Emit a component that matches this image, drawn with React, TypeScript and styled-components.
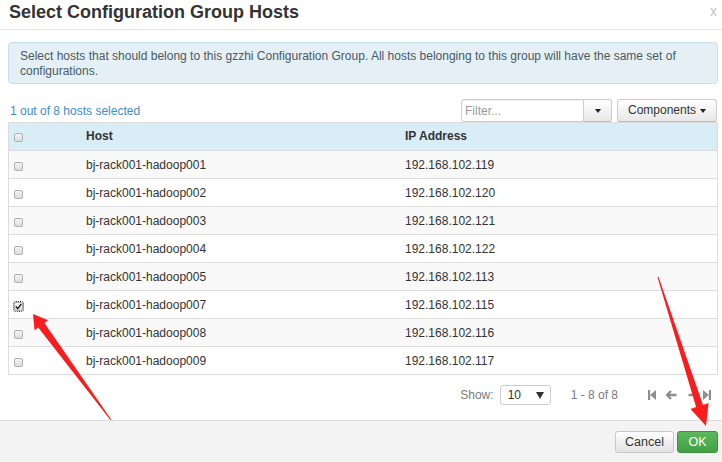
import React from "react";
import styled, { createGlobalStyle } from "styled-components";

const GlobalStyle = createGlobalStyle`
  html, body { margin: 0; padding: 0; background: #fff; }
  body {
    font-family: "Liberation Sans", Arial, Helvetica, sans-serif;
    font-size: 12px;
    color: #333;
  }
  * { box-sizing: border-box; }
`;

const Modal = styled.div`
  position: relative;
  width: 722px;
  height: 462px;
  overflow: hidden;
  display: flex;
  flex-direction: column;
  background: #fff;
`;

const Header = styled.div`
  display: flex;
  justify-content: space-between;
  align-items: flex-start;
  height: 30px;
  padding: 0 5px 0 9px;
  border-bottom: 1px solid #e5e5e5;
`;

const Title = styled.h3`
  margin: 0;
  font-size: 18px;
  line-height: 24px;
  font-weight: bold;
  color: #333;
`;

const Close = styled.span`
  font-size: 14px;
  line-height: 22px;
  color: #c4c4c4;
`;

const Body = styled.div`
  flex: 1;
  display: flex;
  flex-direction: column;
  padding: 12px 4px 0 8px;
`;

const Alert = styled.div`
  border: 1px solid #c9dde6;
  background: #e4f0f5;
  border-radius: 4px;
  padding: 6px 11px 4px;
  line-height: 15px;
  color: #4a5a63;
`;

const Toolbar = styled.div`
  margin-top: 15px;
  height: 23px;
  display: flex;
  align-items: center;
  justify-content: space-between;
`;

const Count = styled.span`
  padding-left: 2px;
  color: #428bca;
`;

const Tools = styled.div`
  display: flex;
  align-items: stretch;
  height: 23px;
  margin-right: 1px;
`;

const FilterInput = styled.input`
  width: 123px;
  height: 23px;
  border: 1px solid #ccc;
  border-radius: 3px 0 0 3px;
  padding: 0 3px;
  font-family: inherit;
  font-size: 12px;
  color: #333;
  outline: none;
  box-shadow: inset 0 1px 1px rgba(0, 0, 0, 0.06);
  &::placeholder { color: #9a9a9a; }
`;

const Btn = styled.button<{ $w?: number; $grouped?: boolean }>`
  width: ${(p) => (p.$w ? `${p.$w}px` : "auto")};
  height: 23px;
  margin: 0;
  padding: 0 0 1px;
  display: flex;
  align-items: center;
  justify-content: center;
  gap: 4px;
  font-family: inherit;
  font-size: 12px;
  color: #333;
  border: 1px solid #ccc;
  border-bottom-color: #b8b8b8;
  border-radius: ${(p) => (p.$grouped ? "0 3px 3px 0" : "3px")};
  ${(p) => (p.$grouped ? "border-left: none;" : "margin-left: 5px;")}
  background: linear-gradient(#ffffff, #e8e8e8);
`;

const Caret = styled.span`
  width: 0;
  height: 0;
  border-left: 3px solid transparent;
  border-right: 3px solid transparent;
  border-top: 4px solid #222;
  margin-top: 1px;
`;

const Table = styled.div`
  border: 1px solid #ddd;
`;

const Row = styled.div<{ $head?: boolean; $striped?: boolean }>`
  display: grid;
  grid-template-columns: 77px 319px 1fr;
  align-items: center;
  height: ${(p) => (p.$head ? "27px" : "28px")};
  padding-bottom: ${(p) => (p.$head ? "2px" : "0")};
  border-top: ${(p) => (p.$head ? "none" : "1px solid #ddd")};
  background: ${(p) => (p.$head ? "#d9edf7" : p.$striped ? "#f9f9f9" : "#fff")};
  font-weight: ${(p) => (p.$head ? "bold" : "normal")};
  color: #333;
`;

const CheckCell = styled.div<{ $head?: boolean }>`
  padding-left: 5px;
  display: flex;
  align-items: center;
  padding-top: ${(p) => (p.$head ? "4px" : "3px")};
`;

const Box = styled.span<{ $checked?: boolean }>`
  position: relative;
  width: 9px;
  height: 9px;
  border: 1px solid #b0b0b0;
  border-radius: 2px;
  background: linear-gradient(#f4f4f4, #dcdcdc);
  outline: ${(p) => (p.$checked ? "1px dotted #333" : "none")};
  outline-offset: 0px;
  display: flex;
  align-items: center;
  justify-content: center;
`;

const Pager = styled.div`
  display: flex;
  align-items: center;
  justify-content: flex-end;
  padding: 10px 7px 0 0;
  color: #777;
`;

const ShowLabel = styled.span`
  color: #7a7a7a;
`;

const Select = styled.div`
  margin-left: 6px;
  width: 51px;
  height: 20px;
  border: 1px solid #ccc;
  border-radius: 3px;
  background: #fff;
  display: flex;
  align-items: center;
  justify-content: space-between;
  padding: 0 6px 0 7px;
  color: #333;
  font-size: 12px;
`;

const DownTri = styled.span`
  width: 0;
  height: 0;
  border-left: 4px solid transparent;
  border-right: 4px solid transparent;
  border-top: 7px solid #333;
`;

const Range = styled.span`
  margin-left: 20px;
  color: #7a7a7a;
`;

const Icons = styled.div`
  margin-left: 30px;
  display: flex;
  align-items: center;
`;

const Icon = styled.svg<{ $ml?: number }>`
  margin-left: ${(p) => p.$ml ?? 0}px;
  display: block;
  fill: #8d8d8d;
  stroke: #8d8d8d;
`;

const Footer = styled.div`
  height: 42px;
  border-top: 1px solid #ddd;
  background: #f3f3f3;
  display: flex;
  justify-content: flex-end;
  align-items: flex-start;
  gap: 3px;
  padding: 10px 4px 0 0;
`;

const FooterBtn = styled.button<{ $primary?: boolean; $w: number }>`
  width: ${(p) => p.$w}px;
  height: 22px;
  padding: 0;
  font-family: inherit;
  font-size: 12.5px;
  border-radius: 3px;
  color: ${(p) => (p.$primary ? "#fff" : "#333")};
  border: 1px solid ${(p) => (p.$primary ? "#3e8f3e" : "#c8c8c8")};
  background: ${(p) =>
    p.$primary
      ? "linear-gradient(#5cb85c, #44a044)"
      : "linear-gradient(#ffffff, #e2e2e2)"};
`;

const Overlay = styled.svg`
  position: absolute;
  left: 0;
  top: 0;
  width: 722px;
  height: 462px;
  pointer-events: none;
`;

const hosts = [
  ["bj-rack001-hadoop001", "192.168.102.119"],
  ["bj-rack001-hadoop002", "192.168.102.120"],
  ["bj-rack001-hadoop003", "192.168.102.121"],
  ["bj-rack001-hadoop004", "192.168.102.122"],
  ["bj-rack001-hadoop005", "192.168.102.113"],
  ["bj-rack001-hadoop007", "192.168.102.115"],
  ["bj-rack001-hadoop008", "192.168.102.116"],
  ["bj-rack001-hadoop009", "192.168.102.117"],
];

const Check = ({ checked }: { checked?: boolean }) => (
  <Box $checked={checked}>
    {checked && (
      <svg width="7" height="7" viewBox="0 0 7 7">
        <path d="M0.8 3.6 L2.7 5.6 L6.3 1" fill="none" stroke="#222" strokeWidth="1.4" />
      </svg>
    )}
  </Box>
);

function arrow(tip: [number, number], tail: [number, number], headLen: number, headHalf: number, shaftHalf: number) {
  const dx = tip[0] - tail[0];
  const dy = tip[1] - tail[1];
  const len = Math.hypot(dx, dy);
  const ux = dx / len;
  const uy = dy / len;
  const nx = -uy;
  const ny = ux;
  const bx = tip[0] - ux * headLen;
  const by = tip[1] - uy * headLen;
  const pts = [
    [tip[0], tip[1]],
    [bx + nx * headHalf, by + ny * headHalf],
    [bx + nx * shaftHalf, by + ny * shaftHalf],
    [tail[0] + nx * 0.5, tail[1] + ny * 0.5],
    [tail[0] - nx * 0.5, tail[1] - ny * 0.5],
    [bx - nx * shaftHalf, by - ny * shaftHalf],
    [bx - nx * headHalf, by - ny * headHalf],
  ];
  return pts.map((p) => `${p[0].toFixed(1)},${p[1].toFixed(1)}`).join(" ");
}

export default function App() {
  return (
    <Modal>
      <GlobalStyle />
      <Header>
        <Title>Select Configuration Group Hosts</Title>
        <Close>x</Close>
      </Header>
      <Body>
        <Alert>
          Select hosts that should belong to this gzzhi Configuration Group. All hosts belonging to this group will have the same set of configurations.
        </Alert>
        <Toolbar>
          <Count>1 out of 8 hosts selected</Count>
          <Tools>
            <FilterInput placeholder="Filter..." />
            <Btn $w={28} $grouped>
              <Caret />
            </Btn>
            <Btn $w={100}>
              Components <Caret />
            </Btn>
          </Tools>
        </Toolbar>
        <Table>
          <Row $head>
            <CheckCell $head>
              <Check />
            </CheckCell>
            <div>Host</div>
            <div>IP Address</div>
          </Row>
          {hosts.map(([h, ip], i) => (
            <Row key={h} $striped={i % 2 === 0}>
              <CheckCell>
                <Check checked={h.endsWith("007")} />
              </CheckCell>
              <div>{h}</div>
              <div>{ip}</div>
            </Row>
          ))}
        </Table>
        <Pager>
          <ShowLabel>Show:</ShowLabel>
          <Select>
            10 <DownTri />
          </Select>
          <Range>1 - 8 of 8</Range>
          <Icons>
            <Icon width="8" height="10" viewBox="0 0 8 10">
              <rect x="0" y="0" width="2.2" height="10" stroke="none" />
              <polygon points="8,0 8,10 2.2,5" stroke="none" />
            </Icon>
            <Icon $ml={9} width="12" height="10" viewBox="0 0 12 10">
              <path d="M11.5 5 H2 M6 1 L2 5 L6 9" fill="none" strokeWidth="2.4" strokeLinejoin="round" />
            </Icon>
            <Icon $ml={11} width="12" height="10" viewBox="0 0 12 10">
              <path d="M0.5 5 H10 M6 1 L10 5 L6 9" fill="none" strokeWidth="2.4" strokeLinejoin="round" />
            </Icon>
            <Icon $ml={3} width="8" height="10" viewBox="0 0 8 10">
              <rect x="5.8" y="0" width="2.2" height="10" stroke="none" />
              <polygon points="0,0 0,10 5.8,5" stroke="none" />
            </Icon>
          </Icons>
        </Pager>
      </Body>
      <Footer>
        <FooterBtn $w={59}>Cancel</FooterBtn>
        <FooterBtn $w={41} $primary>
          OK
        </FooterBtn>
      </Footer>
      <Overlay viewBox="0 0 722 462">
        <polygon points={arrow([33, 314], [111, 420], 14, 8.5, 3.8)} fill="#fb1d1d" />
        <polygon points={arrow([706, 426], [658, 277], 21, 9.5, 3.6)} fill="#fb1d1d" />
      </Overlay>
    </Modal>
  );
}
